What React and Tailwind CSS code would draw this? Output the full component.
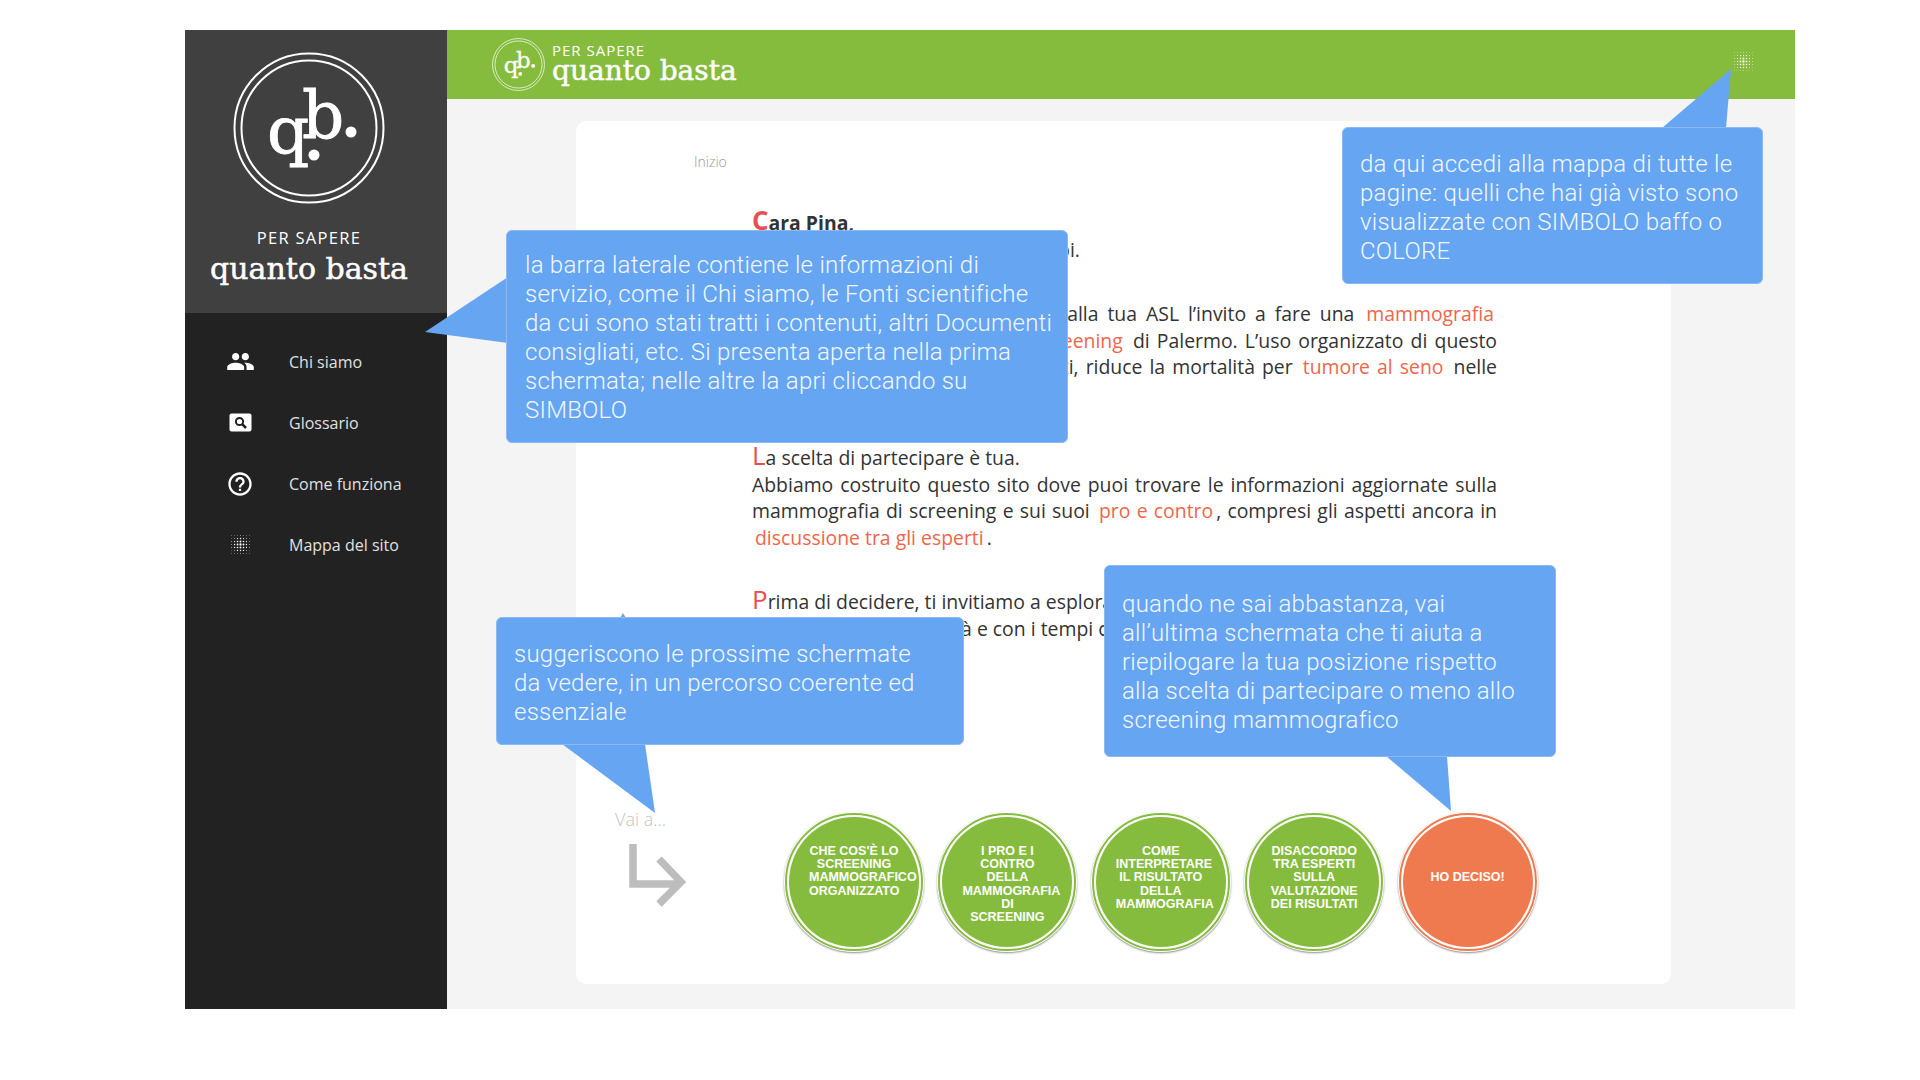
import React from 'react';
import { MdPeople, MdHelpOutline } from 'react-icons/md';

const DotGrid = ({ size = 21 }) => {
  const dots = [];
  for (let row = -3; row <= 3; row++) {
    for (let col = -3; col <= 3; col++) {
      const dist = Math.sqrt(row * row + col * col);
      dots.push(<circle key={`${row}-${col}`} cx={12 + col * 3.4} cy={12 + row * 3.4} r={Math.max(0.35, 1.3 - dist * 0.26)} fill="#fff" />);
    }
  }
  return <svg width={size} height={size} viewBox="0 0 24 24">{dots}</svg>;
};

const GlossaryIcon = () => (
  <svg width="23" height="19" viewBox="0 0 23 19">
    <rect x="0.5" y="0.5" width="22" height="18" rx="2" fill="#fff" />
    <circle cx="10.5" cy="8.5" r="3.6" fill="none" stroke="#222" strokeWidth="2" />
    <path d="M13.2 11.2 L17 15" stroke="#222" strokeWidth="2.6" />
  </svg>
);

const QbLogo = ({ size }) => (
  <svg width={size} height={size} viewBox="0 0 152 152">
    <circle cx="76" cy="76" r="74.5" fill="none" stroke="#fff" strokeWidth="2" />
    <circle cx="76" cy="76" r="67.5" fill="none" stroke="#fff" strokeWidth="2" />
    <text x="34" y="101" fontSize="66" fill="#fff" stroke="#fff" strokeWidth="0.8" style={{ fontFamily: '"DejaVu Serif", serif' }}>q</text>
    <text x="69" y="86" fontSize="66" fill="#fff" stroke="#fff" strokeWidth="0.8" style={{ fontFamily: '"DejaVu Serif", serif' }}>b</text>
    <circle cx="118" cy="80" r="5.5" fill="#fff" />
    <circle cx="81" cy="103" r="5.5" fill="#fff" />
  </svg>
);

const navItems = [
  { label: 'Chi siamo', icon: <MdPeople size={29} color="#fff" /> },
  { label: 'Glossario', icon: <GlossaryIcon /> },
  { label: 'Come funziona', icon: <MdHelpOutline size={28} color="#fff" /> },
  { label: 'Mappa del sito', icon: <DotGrid /> },
];

const Red = ({ children }) => <span className="text-[#f0654a] px-[3px]">{children}</span>;
const Cap = ({ children }) => <span className="text-[26px] leading-[26px] text-[#e8504f]">{children}</span>;
const Line = ({ children }) => <div className="whitespace-nowrap text-justify [text-align-last:justify]">{children}</div>;

const circles = [
  { label: "CHE COS'È LO SCREENING MAMMOGRAFICO ORGANIZZATO" },
  { label: 'I PRO E I CONTRO DELLA MAMMOGRAFIA DI SCREENING' },
  { label: 'COME INTERPRETARE IL RISULTATO DELLA MAMMOGRAFIA' },
  { label: 'DISACCORDO TRA ESPERTI SULLA VALUTAZIONE DEI RISULTATI' },
];

const Circle = ({ label, orange }) => (
  <div className={`w-[140px] h-[140px] rounded-full bg-white p-[1px] shadow-[0_1px_2px_rgba(0,0,0,0.45)] shrink-0`}>
    <div className={`w-full h-full rounded-full border-[2px] ${orange ? 'border-[#f07a4f]' : 'border-[#85bc3d]'} p-[2px]`}>
      <div className={`w-full h-full rounded-full flex justify-center text-center text-white font-bold text-[12.5px] leading-[13.2px] ${orange ? 'bg-[#f07a4f] pt-[54px]' : 'bg-[#85bc3d] pt-[28px]'}`}>
        <div className="w-[90px] [font-family:'Liberation_Sans',sans-serif]">{label}</div>
      </div>
    </div>
  </div>
);

const calloutBase = "absolute bg-[#66a5f2] border border-[#8ab9f5] rounded-[6px] text-[#f2f7ff] text-[24px] leading-[29px] font-light tracking-[0.25px] whitespace-nowrap [font-family:Roboto,sans-serif]";

export default function App() {
  return (
    <div className="relative w-[1920px] h-[1080px] bg-white overflow-hidden pt-[30px] pl-[185px] [font-family:'Open_Sans',sans-serif]">
      <div className="flex w-[1610px] h-[979px]">
        {/* Sidebar */}
        <aside className="w-[262px] shrink-0 bg-[#222222] flex flex-col">
          <div className="h-[283px] bg-[#404040] flex flex-col items-center pt-[22px] pr-[14px] text-white">
            <QbLogo size={152} />
            <div className="mt-[24px] text-[16.5px] leading-[20px] tracking-[1.3px]">PER SAPERE</div>
            <div className="mt-[3px] text-[30px] leading-[36px] [-webkit-text-stroke:0.5px_white] [font-family:'DejaVu_Serif',serif]">quanto basta</div>
          </div>
          <nav className="flex flex-col pt-[18px]">
            {navItems.map((item) => (
              <div key={item.label} className="h-[61px] flex items-center text-[16px] text-[#e0e0e0]">
                <div className="w-[104px] pl-[6px] flex justify-center">
                  <div className="w-[30px] h-[30px] flex items-center justify-center">{item.icon}</div>
                </div>
                <span>{item.label}</span>
              </div>
            ))}
          </nav>
        </aside>

        {/* Main */}
        <main className="flex-1 bg-[#f4f4f4] flex flex-col">
          <header className="h-[69px] shrink-0 bg-[#85bc3d] flex items-center justify-between pl-[45px] pr-[41px] text-white">
            <div className="flex items-center gap-[7px]">
              <QbLogo size={53} />
              <div className="-mt-[2px]">
                <div className="text-[15px] leading-[15px] tracking-[1px]">PER SAPERE</div>
                <div className="text-[28px] leading-[26px] [-webkit-text-stroke:0.5px_white] [font-family:'DejaVu_Serif',serif]">quanto basta</div>
              </div>
            </div>
            <div className="pb-[6px]"><DotGrid /></div>
          </header>

          <section className="mt-[22px] ml-[129px] w-[1095px] h-[863px] bg-white rounded-[10px] pt-[32px] pl-[118px] flex flex-col">
            <div className="text-[14px] leading-[18px] text-[#999999] font-light">Inizio</div>
            <div className="w-[745px] ml-[58px] mt-[36px] text-[19.4px] leading-[26.5px] text-[#333333]">
              <div className="font-bold"><Cap>C</Cap>ara Pina,</div>
              <div>qui tu trovi le risposte a tutti i dubbi.</div>
              <div className="h-[38px]" />
              <Line>Hai ricevuto o stai per ricevere dalla tua ASL l’invito a fare una <Red>mammografia</Red></Line>
              <Line>nell’ambito del programma di <Red>screening</Red> di Palermo. L’uso organizzato di questo</Line>
              <Line>esame, secondo molti degli esperti, riduce la mortalità per <Red>tumore al seno</Red> nelle</Line>
              <div>donne della tua età.</div>
              <div className="h-[35px]" />
              <div><Cap>L</Cap>a scelta di partecipare è tua.</div>
              <Line>Abbiamo costruito questo sito dove puoi trovare le informazioni aggiornate sulla</Line>
              <Line>mammografia di screening e sui suoi <Red>pro e contro</Red>, compresi gli aspetti ancora in</Line>
              <div><Red>discussione tra gli esperti</Red>.</div>
              <div className="h-[35px]" />
              <div className="whitespace-nowrap"><Cap>P</Cap>rima di decidere, ti invitiamo a esplorare il sito in ogni sua parte</div>
              <div className="whitespace-nowrap">e secondo le tue priorità e con i tempi che preferisci.</div>
            </div>

            <div className="mt-auto mb-[32px] flex items-start -ml-[79px]">
              <div className="w-[170px] shrink-0 text-[18px] leading-[24px] text-[#c4c4c4] font-light -mt-[5px]">
                <div>Vai a...</div>
                <svg className="ml-[14px] mt-[13px]" width="60" height="64" viewBox="0 0 60 64">
                  <path d="M4 0 V40 H50" fill="none" stroke="#bdbdbd" strokeWidth="7.5" />
                  <path d="M30 15 L52 38 L30 60" fill="none" stroke="#bdbdbd" strokeWidth="7.5" />
                </svg>
              </div>
              <div className="flex gap-[13.4px] -ml-[1px]">
                {circles.map((c) => <Circle key={c.label} label={c.label} />)}
                <Circle label="HO DECISO!" orange />
              </div>
            </div>
          </section>
        </main>
      </div>

      {/* Callout tails */}
      <svg className="absolute left-0 top-0 pointer-events-none" width="1920" height="1080">
        <polygon points="508,277 425,332 508,343" fill="#66a5f2" />
        <polygon points="1662,128 1731,69 1726,128" fill="#66a5f2" />
        <polygon points="562,744 645,744 655,813" fill="#66a5f2" />
        <polygon points="620,618 623,613 626,618" fill="#66a5f2" />
        <polygon points="1386,756 1447,756 1451,811" fill="#66a5f2" />
      </svg>

      {/* Callouts */}
      <div className={`${calloutBase} left-[506px] top-[230px] w-[562px] h-[213px] pl-[18px] pt-[20px]`}>
        la barra laterale contiene le informazioni di<br />
        servizio, come il Chi siamo, le Fonti scientifiche<br />
        da cui sono stati tratti i contenuti, altri Documenti<br />
        consigliati, etc. Si presenta aperta nella prima<br />
        schermata; nelle altre la apri cliccando su<br />
        SIMBOLO
      </div>
      <div className={`${calloutBase} left-[1342px] top-[127px] w-[421px] h-[157px] pl-[17px] pt-[22px]`}>
        da qui accedi alla mappa di tutte le<br />
        pagine: quelli che hai già visto sono<br />
        visualizzate con SIMBOLO baffo o<br />
        COLORE
      </div>
      <div className={`${calloutBase} left-[496px] top-[617px] w-[468px] h-[128px] pl-[17px] pt-[22px]`}>
        suggeriscono le prossime schermate<br />
        da vedere, in un percorso coerente ed<br />
        essenziale
      </div>
      <div className={`${calloutBase} left-[1104px] top-[565px] w-[452px] h-[192px] pl-[17px] pt-[24px]`}>
        quando ne sai abbastanza, vai<br />
        all’ultima schermata che ti aiuta a<br />
        riepilogare la tua posizione rispetto<br />
        alla scelta di partecipare o meno allo<br />
        screening mammografico
      </div>
    </div>
  );
}
